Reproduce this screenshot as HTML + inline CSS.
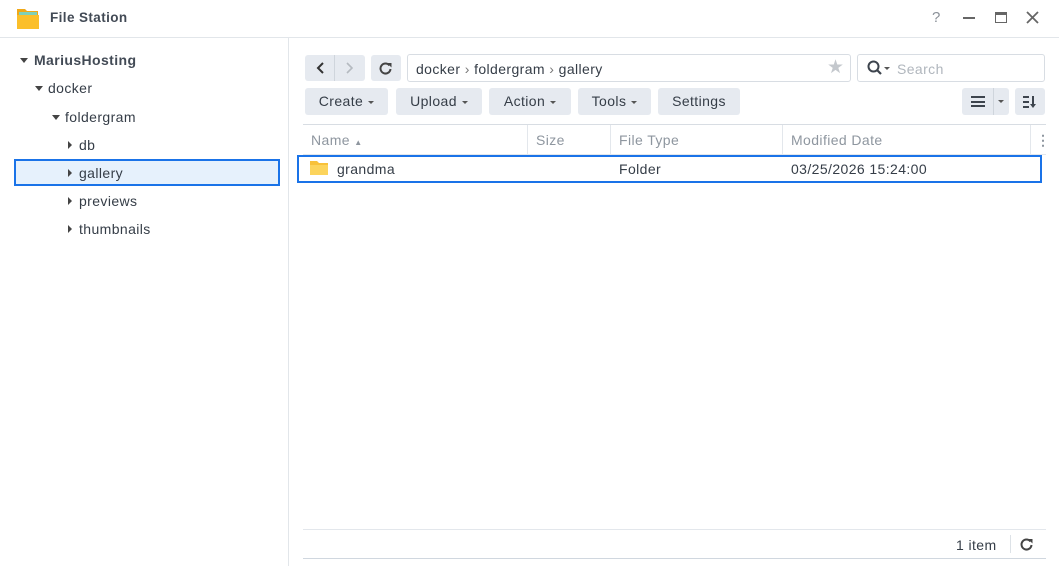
<!DOCTYPE html>
<html><head><style>
*{box-sizing:border-box;margin:0;padding:0}
body{width:1059px;height:566px;background:#fff;font-family:"Liberation Sans",sans-serif;font-size:14px;letter-spacing:0.4px;color:#353d47;position:relative;overflow:hidden}
.a{position:absolute}
.btn{position:absolute;background:#e6eaf0;border-radius:3px;height:27px;top:88px;line-height:27px;text-align:center;font-size:14px;color:#353d47}
.car{display:inline-block;width:0;height:0;border-left:3px solid transparent;border-right:3px solid transparent;border-top:3px solid #555;vertical-align:middle;margin-left:5px}
.tri{position:absolute;width:0;height:0;border-left:4px solid transparent;border-right:4px solid transparent;border-top:5px solid #444}
.trr{position:absolute;width:0;height:0;border-top:4px solid transparent;border-bottom:4px solid transparent;border-left:4px solid #444}
.tx{position:absolute;font-size:14px}
.hd{position:absolute;top:132px;color:#8e969f;font-size:14px}
.vl{position:absolute;top:125px;height:29px;width:1px;background:#e3e7ec}
</style></head><body>
<svg class="a" style="left:16px;top:6px" width="24" height="24" viewBox="0 0 24 24"><path d="M1 3h8l2 2h11v17H1z" fill="#f0a818"/><rect x="3" y="6" width="18" height="4" fill="#7fd0b8"/><path d="M1 9h22v14H1z" fill="#fbbf2a"/></svg>
<div class="a" style="left:50px;top:10px;font-weight:bold;font-size:13.5px;color:#424a55">File Station</div>
<div class="a" style="left:932px;top:9px;color:#8a9098;font-size:15px">?</div>
<div class="a" style="left:963px;top:17px;width:12px;height:2px;background:#666"></div>
<div class="a" style="left:995px;top:12px;width:12px;height:11px;border:1.5px solid #666;border-top-width:3px"></div>
<svg class="a" style="left:1026px;top:11px" width="13" height="13"><path d="M1 1l11 11M12 1L1 12" stroke="#666" stroke-width="1.8"/></svg>
<div class="a" style="left:0;top:37px;width:1059px;height:1px;background:#e2e6ea"></div>
<div class="a" style="left:288px;top:38px;width:1px;height:528px;background:#e2e6ea"></div>
<div class="tri" style="left:20px;top:58px"></div><div class="tx" style="left:34px;top:52px;font-weight:bold;color:#424a55">MariusHosting</div>
<div class="tri" style="left:35px;top:86px"></div><div class="tx" style="left:48px;top:80px">docker</div>
<div class="tri" style="left:52px;top:115px"></div><div class="tx" style="left:65px;top:109px">foldergram</div>
<div class="trr" style="left:68px;top:141px"></div><div class="tx" style="left:79px;top:137px">db</div>
<div class="a" style="left:14px;top:159px;width:266px;height:27px;background:#e6f1fc;border:2px solid #1a73e8"></div>
<div class="trr" style="left:68px;top:169px"></div><div class="tx" style="left:79px;top:165px">gallery</div>
<div class="trr" style="left:68px;top:197px"></div><div class="tx" style="left:79px;top:193px">previews</div>
<div class="trr" style="left:68px;top:225px"></div><div class="tx" style="left:79px;top:221px">thumbnails</div>
<div class="a" style="left:305px;top:55px;width:60px;height:26px;background:#e6eaf0;border-radius:3px"></div>
<div class="a" style="left:334px;top:55px;width:1px;height:26px;background:#cfd5dc"></div>
<svg class="a" style="left:313px;top:60px" width="16" height="16"><path d="M10 3L5 8l5 5" stroke="#333" stroke-width="2" fill="none"/></svg>
<svg class="a" style="left:341px;top:60px" width="16" height="16"><path d="M6 3l5 5-5 5" stroke="#b5bac0" stroke-width="1.6" fill="none"/></svg>
<div class="a" style="left:371px;top:55px;width:30px;height:26px;background:#e6eaf0;border-radius:3px"></div>
<svg class="a" style="left:378px;top:61px" width="15" height="15"><path d="M11.5 4.5A5 5 0 1 0 12.5 8" stroke="#444" stroke-width="2" fill="none"/><path d="M9 2h4.5v4.5z" fill="#444"/></svg>
<div class="a" style="left:407px;top:54px;width:444px;height:28px;border:1px solid #d8dde3;border-radius:3px"></div>
<div class="tx" style="left:416px;top:61px">docker <span style="color:#777">›</span> foldergram <span style="color:#777">›</span> gallery</div>
<div class="a" style="left:827px;top:56px;color:#c4c8cd;font-size:19px">★</div>
<div class="a" style="left:857px;top:54px;width:188px;height:28px;border:1px solid #d8dde3;border-radius:3px"></div>
<svg class="a" style="left:867px;top:60px" width="16" height="16"><circle cx="6.5" cy="6.5" r="5" stroke="#3d444d" stroke-width="2" fill="none"/><path d="M10 10l4 4" stroke="#3d444d" stroke-width="2.2"/></svg>
<div class="car" style="position:absolute;left:884px;top:67px;margin:0"></div>
<div class="tx" style="left:897px;top:61px;color:#b0b6bd">Search</div>
<div class="btn" style="left:305px;width:83px">Create<span class="car"></span></div>
<div class="btn" style="left:396px;width:86px">Upload<span class="car"></span></div>
<div class="btn" style="left:489px;width:82px">Action<span class="car"></span></div>
<div class="btn" style="left:578px;width:73px">Tools<span class="car"></span></div>
<div class="btn" style="left:658px;width:82px">Settings</div>
<div class="btn" style="left:962px;width:47px"></div>
<div class="a" style="left:993px;top:88px;width:1px;height:27px;background:#cfd5dc"></div>
<div class="a" style="left:971px;top:96px;width:14px;height:11px;border-top:2px solid #3d444d;border-bottom:2px solid #3d444d"></div>
<div class="a" style="left:971px;top:100.5px;width:14px;height:2px;background:#3d444d"></div>
<div class="car" style="position:absolute;left:998px;top:100px;margin:0"></div>
<div class="btn" style="left:1015px;width:30px"></div>
<svg class="a" style="left:1022px;top:94px" width="16" height="16"><path d="M1 3h6M1 8h6M1 13h6" stroke="#3d444d" stroke-width="2"/><path d="M11 2v10" stroke="#3d444d" stroke-width="2"/><path d="M8 10h6l-3 4z" fill="#3d444d"/></svg>
<div class="a" style="left:303px;top:124px;width:743px;height:1px;background:#d8dde3"></div>
<div class="a" style="left:303px;top:154px;width:743px;height:1px;background:#e3e7ec"></div>
<div class="hd" style="left:311px">Name <span style="font-size:8px">▲</span></div>
<div class="vl" style="left:527px"></div><div class="hd" style="left:536px">Size</div>
<div class="vl" style="left:610px"></div><div class="hd" style="left:619px">File Type</div>
<div class="vl" style="left:782px"></div><div class="hd" style="left:791px">Modified Date</div>
<div class="vl" style="left:1030px"></div><div class="hd" style="left:1036px;font-weight:bold">⋮</div>
<div class="a" style="left:297px;top:155px;width:745px;height:28px;border:2px solid #1a73e8"></div>
<svg class="a" style="left:310px;top:160px" width="18" height="16"><path d="M0 1h7l2 2h9v12H0z" fill="#f8c13a"/><path d="M0 5h18v10H0z" fill="#fcd45c"/></svg>
<div class="tx" style="left:337px;top:161px">grandma</div>
<div class="tx" style="left:619px;top:161px">Folder</div>
<div class="tx" style="left:791px;top:161px">03/25/2026 15:24:00</div>
<div class="a" style="left:303px;top:529px;width:743px;height:1px;background:#e3e7ec"></div>
<div class="a" style="left:303px;top:558px;width:743px;height:1px;background:#d0d7df"></div>
<div class="tx" style="left:956px;top:537px">1 item</div>
<div class="a" style="left:1010px;top:535px;width:1px;height:18px;background:#dde2e7"></div>
<svg class="a" style="left:1019px;top:537px" width="15" height="15"><path d="M11.5 4.5A5 5 0 1 0 12.5 8" stroke="#444" stroke-width="2" fill="none"/><path d="M9 2h4.5v4.5z" fill="#444"/></svg>
</body></html>
